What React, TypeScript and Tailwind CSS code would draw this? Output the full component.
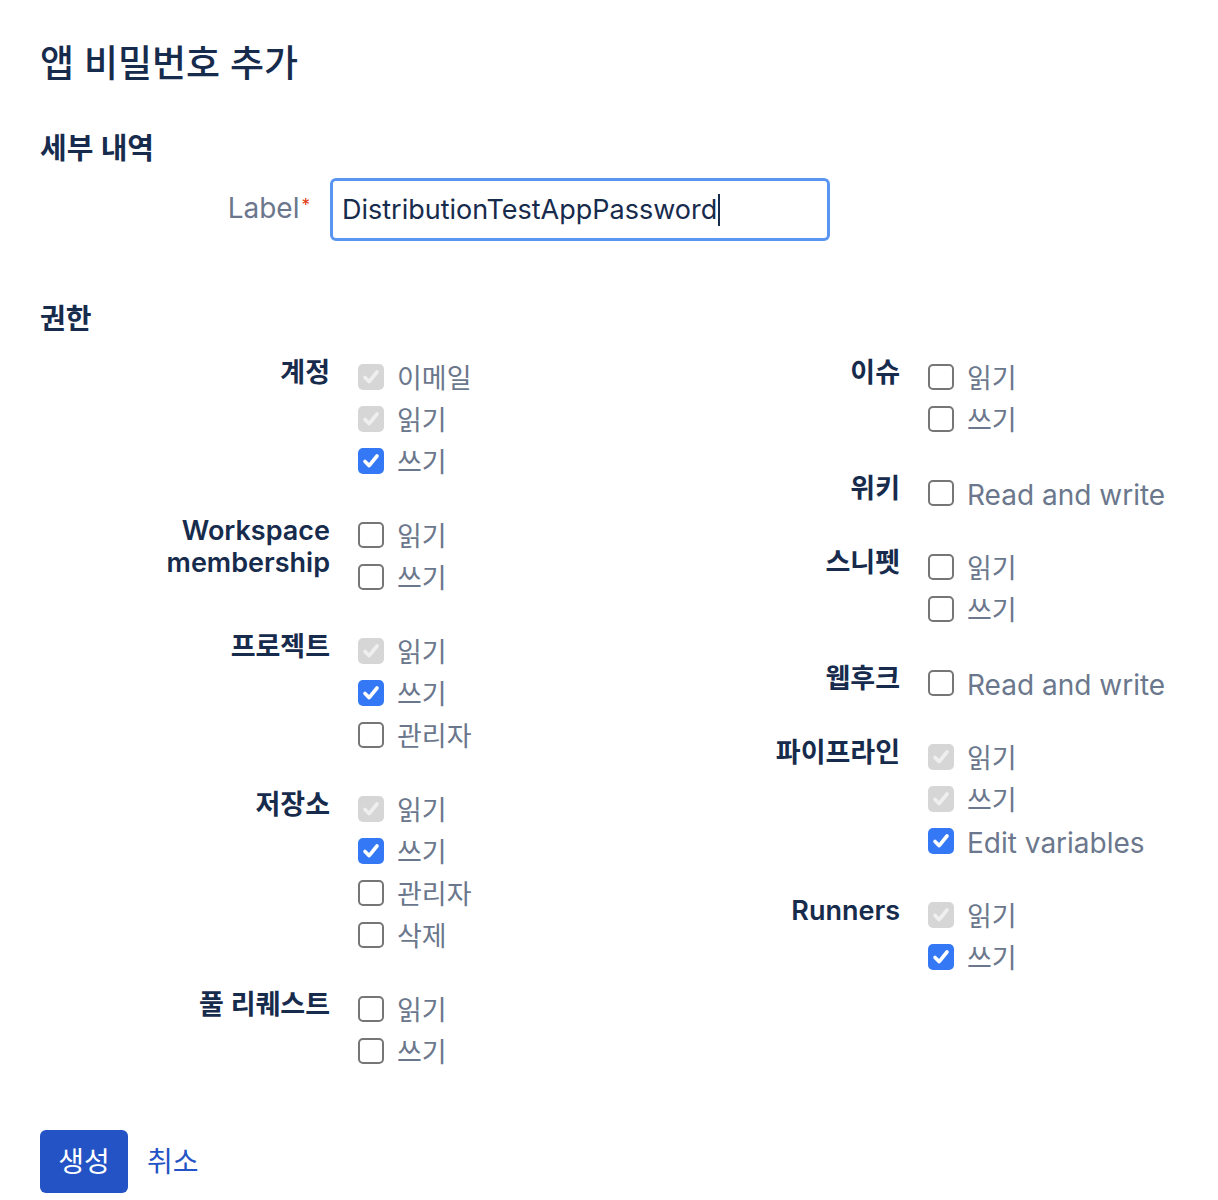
import React from 'react';

type Opt = { label: string; state: 'on' | 'off' | 'locked' };
type Group = { name: string; opts: Opt[] };

const leftGroups: Group[] = [
  { name: '계정', opts: [{ label: '이메일', state: 'locked' }, { label: '읽기', state: 'locked' }, { label: '쓰기', state: 'on' }] },
  { name: 'Workspace membership', opts: [{ label: '읽기', state: 'off' }, { label: '쓰기', state: 'off' }] },
  { name: '프로젝트', opts: [{ label: '읽기', state: 'locked' }, { label: '쓰기', state: 'on' }, { label: '관리자', state: 'off' }] },
  {
    name: '저장소',
    opts: [
      { label: '읽기', state: 'locked' },
      { label: '쓰기', state: 'on' },
      { label: '관리자', state: 'off' },
      { label: '삭제', state: 'off' },
    ],
  },
  { name: '풀 리퀘스트', opts: [{ label: '읽기', state: 'off' }, { label: '쓰기', state: 'off' }] },
];

const rightGroups: Group[] = [
  { name: '이슈', opts: [{ label: '읽기', state: 'off' }, { label: '쓰기', state: 'off' }] },
  { name: '위키', opts: [{ label: 'Read and write', state: 'off' }] },
  { name: '스니펫', opts: [{ label: '읽기', state: 'off' }, { label: '쓰기', state: 'off' }] },
  { name: '웹후크', opts: [{ label: 'Read and write', state: 'off' }] },
  {
    name: '파이프라인',
    opts: [
      { label: '읽기', state: 'locked' },
      { label: '쓰기', state: 'locked' },
      { label: 'Edit variables', state: 'on' },
    ],
  },
  { name: 'Runners', opts: [{ label: '읽기', state: 'locked' }, { label: '쓰기', state: 'on' }] },
];

// latin labels render a touch wider in the reference than hangul ones
const isLatin = (s: string) => /^[A-Za-z ]+$/.test(s);

function Box({ state }: { state: Opt['state'] }) {
  if (state === 'off') {
    return <span className="block h-[26px] w-[26px] shrink-0 rounded-[5px] border-2 border-[#767676] bg-white" />;
  }
  const bg = state === 'on' ? 'bg-[#3478f6]' : 'bg-[#d6d6d6]';
  const stroke = state === 'on' ? '#ffffff' : '#efefef';
  return (
    <span className={`flex h-[26px] w-[26px] shrink-0 items-center justify-center rounded-[5px] ${bg}`}>
      <svg width="20" height="20" viewBox="0 0 20 20" fill="none">
        <path d="M4 10.5 L8.2 14.6 L16 5" stroke={stroke} strokeWidth="3.6" strokeLinecap="round" strokeLinejoin="round" />
      </svg>
    </span>
  );
}

function PermGroup({ group }: { group: Group }) {
  return (
    <div className="flex">
      <div className="w-[290px] pt-[1px] text-right text-[27px] font-semibold leading-[32px] text-[#172b4d]">
        {group.name === 'Workspace membership' ? (
          <>
            Workspace
            <br />
            membership
          </>
        ) : (
          group.name
        )}
      </div>
      <div className="ml-[28px] flex flex-col">
        {group.opts.map((o, i) => (
          <label key={i} className="flex h-[42px] items-center gap-[13px]">
            <Box state={o.state} />
            <span
              className={`pt-[4px] leading-[34px] text-[#6b778c] ${isLatin(o.label) ? 'text-[28px]' : 'text-[27px]'}`}
            >
              {o.label}
            </span>
          </label>
        ))}
      </div>
    </div>
  );
}

export default function App() {
  return (
    <div
      className="min-h-[1200px] bg-white px-[40px] pt-[38px]"
      style={{ fontFamily: 'Inter, "Noto Sans CJK KR", sans-serif' }}
    >
      <h1 className="text-[37px] font-medium leading-[52px] text-[#172b4d]">앱 비밀번호 추가</h1>

      <h2 className="mt-[41px] text-[29px] font-semibold leading-[36px] text-[#172b4d]">세부 내역</h2>

      <div className="mt-[11px] flex items-center">
        <div className="w-[290px] pr-[20px] text-right text-[28px] leading-[32px] text-[#6b778c]">
          Label<span className="relative -top-[7px] ml-[2px] text-[17px] text-[#de350b]">*</span>
        </div>
        <div className="flex h-[63px] w-[500px] items-center rounded-[6px] border-[3px] border-[#5b95f2] px-[9px]">
          <span className="text-[27px] leading-[34px] text-[#172b4d]">DistributionTestAppPassword</span>
          <span className="ml-[1px] h-[32px] w-[2px] bg-[#172b4d]" />
        </div>
      </div>

      <h2 className="mt-[60px] text-[28px] font-semibold leading-[36px] text-[#172b4d]">권한</h2>

      <div className="mt-[19px] grid grid-cols-[570px_570px]">
        <div className="flex flex-col gap-[32px]">
          {leftGroups.map((g) => (
            <PermGroup key={g.name} group={g} />
          ))}
        </div>
        <div className="flex flex-col gap-[32px]">
          {rightGroups.map((g) => (
            <PermGroup key={g.name} group={g} />
          ))}
        </div>
      </div>

      <div className="mt-[58px] flex items-center gap-[19px]">
        <button className="h-[63px] w-[88px] rounded-[6px] bg-[#2353c4] text-[28px] text-white">생성</button>
        <span className="text-[28px] text-[#2353c4]">취소</span>
      </div>
    </div>
  );
}
